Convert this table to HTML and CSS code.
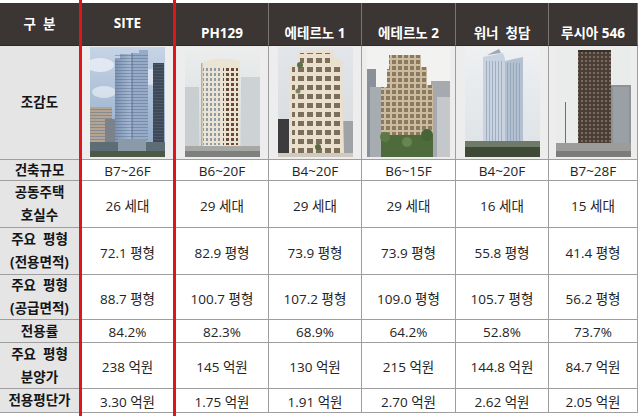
FILE: index.html
```html
<!DOCTYPE html>
<html lang="ko">
<head>
<meta charset="utf-8">
<title>비교표</title>
<link rel="stylesheet" href="styles.css">
</head>
<body>
<div class="sheet">
  <div class="redline red-a"></div>
  <div class="redline red-b"></div>

  <div class="row r-head">
    <div class="cell head head-mid">구 &nbsp;분</div>
    <div class="cell head head-mid">SITE</div>
    <div class="cell head head-low">PH129</div>
    <div class="cell head head-low">에테르노 1</div>
    <div class="cell head head-low">에테르노 2</div>
    <div class="cell head head-low">워너 &nbsp;청담</div>
    <div class="cell head head-low">루시아 546</div>
  </div>

  <div class="row r-img">
    <div class="cell label">조감도</div>
    <div class="cell pic-cell">
      <svg class="pic" viewBox="0 0 75 110" preserveAspectRatio="none">
        <defs>
          <linearGradient id="s1sky" x1="0" y1="0" x2="0" y2="1"><stop offset="0" stop-color="#c6d4e6"/><stop offset="1" stop-color="#8ea8c7"/></linearGradient>
          <linearGradient id="s1t" x1="0" y1="0" x2="1" y2="0"><stop offset="0" stop-color="#7d94b2"/><stop offset="1" stop-color="#a9bcd4"/></linearGradient>
          <pattern id="s1w" width="4" height="3" patternUnits="userSpaceOnUse"><rect y="2" width="4" height="1" fill="#56698a" opacity=".45"/></pattern>
        </defs>
        <rect width="75" height="110" fill="url(#s1sky)"/>
        <ellipse cx="10" cy="18" rx="14" ry="7" fill="#eef2f8" opacity=".75"/>
        <ellipse cx="60" cy="30" rx="14" ry="8" fill="#e9eef6" opacity=".7"/>
        <ellipse cx="14" cy="45" rx="12" ry="6" fill="#f2f5f9" opacity=".6"/>
        <rect x="0" y="60" width="22" height="50" fill="#b3a594"/>
        <rect x="0" y="60" width="22" height="50" fill="url(#s1w)"/>
        <rect x="15" y="72" width="11" height="38" fill="#7b828c"/>
        <path d="M25 12 L30 12 L30 7 L42 7 L42 110 L25 110Z" fill="url(#s1t)"/>
        <path d="M42 6 L49 6 L49 3 L58 3 L58 110 L42 110Z" fill="#96abc6"/>
        <rect x="25" y="8" width="33" height="102" fill="url(#s1w)"/>
        <rect x="41.5" y="6" width="1" height="104" fill="#5d7090"/>
        <rect x="63" y="16" width="11" height="94" fill="#3f4956"/>
        <rect x="63" y="16" width="11" height="94" fill="url(#s1w)"/>
        <rect x="0" y="95" width="75" height="15" fill="#5e6c75"/>
        <rect x="28" y="92" width="28" height="12" fill="#8b9aa8"/>
        <rect x="0" y="104" width="75" height="6" fill="#4b5945"/>
      </svg>
    </div>
    <div class="cell pic-cell">
      <svg class="pic" viewBox="0 0 75 110" preserveAspectRatio="none">
        <defs>
          <linearGradient id="s2sky" x1="0" y1="0" x2="0" y2="1"><stop offset="0" stop-color="#eceeee"/><stop offset="1" stop-color="#d3d7d9"/></linearGradient>
          <pattern id="s2w" width="5" height="5" patternUnits="userSpaceOnUse"><rect x="1" y="1" width="3" height="3" fill="#6b4a34"/></pattern>
          <pattern id="s2g" width="4" height="5" patternUnits="userSpaceOnUse"><rect x="1" y="1" width="2" height="3" fill="#8e9ba3"/></pattern>
        </defs>
        <rect width="75" height="110" fill="url(#s2sky)"/>
        <rect x="0" y="40" width="14" height="70" fill="#c9ced1"/>
        <rect x="56" y="30" width="19" height="80" fill="#cdd2d5"/>
        <path d="M16 16 Q34 8 55 14 L55 100 L16 100Z" fill="#ebe4d4"/>
        <rect x="18" y="20" width="18" height="78" fill="url(#s2g)"/>
        <rect x="38" y="19" width="15" height="79" fill="url(#s2w)"/>
        <rect x="16" y="16" width="1.5" height="84" fill="#b9b1a0"/>
        <rect x="0" y="99" width="75" height="11" fill="#a7a8a5"/>
        <rect x="0" y="104" width="75" height="6" fill="#7e807e"/>
      </svg>
    </div>
    <div class="cell pic-cell">
      <svg class="pic" viewBox="0 0 75 110" preserveAspectRatio="none">
        <defs>
          <linearGradient id="s3sky" x1="0" y1="0" x2="0" y2="1"><stop offset="0" stop-color="#e2e6ea"/><stop offset="1" stop-color="#d6dadd"/></linearGradient>
          <pattern id="s3w" width="9" height="9" patternUnits="userSpaceOnUse"><rect x="2" y="2" width="6" height="5" fill="#7b6f5b"/></pattern>
        </defs>
        <rect width="75" height="110" fill="url(#s3sky)"/>
        <rect x="0" y="72" width="12" height="38" fill="#3c3c3f"/>
        <rect x="62" y="74" width="13" height="36" fill="#9fa3a7"/>
        <path d="M11 18 L20 18 L20 4 L54 2 L56 10 L64 14 L66 108 L11 108Z" fill="#eae0cd"/>
        <rect x="14" y="20" width="50" height="86" fill="url(#s3w)"/>
        <rect x="22" y="6" width="30" height="12" fill="url(#s3w)"/>
        <circle cx="22" cy="18" r="3" fill="#5e6f46"/>
        <circle cx="20" cy="44" r="2.5" fill="#617248" opacity=".8"/>
        <circle cx="40" cy="100" r="3" fill="#5a6a42"/>
        <rect x="0" y="106" width="75" height="4" fill="#cfc9be"/>
      </svg>
    </div>
    <div class="cell pic-cell">
      <svg class="pic wide" viewBox="0 0 83 110" preserveAspectRatio="none">
        <defs>
          <pattern id="s4w" width="6" height="6" patternUnits="userSpaceOnUse"><rect width="6" height="6" fill="#cdbb9d"/><rect x="1" y="1" width="4" height="4" fill="#8a7a61"/></pattern>
        </defs>
        <rect width="83" height="110" fill="#f2f2f1"/>
        <rect x="0" y="22" width="9" height="88" fill="#8a9097"/>
        <rect x="3" y="40" width="16" height="70" fill="#a7acb1"/>
        <rect x="64" y="34" width="19" height="76" fill="#a6aaae"/>
        <rect x="70" y="50" width="13" height="60" fill="#c5c8cb"/>
        <path d="M22 8 L54 8 L54 20 L60 20 L60 38 L66 38 L66 96 L14 96 L14 40 L20 40 L20 22 L22 22Z" fill="url(#s4w)"/>
        <rect x="14" y="88" width="52" height="22" fill="#4d6b3b"/>
        <circle cx="18" cy="90" r="5" fill="#5c7a46"/>
        <circle cx="60" cy="88" r="6" fill="#466437"/>
        <circle cx="40" cy="95" r="5" fill="#6a8450"/>
      </svg>
    </div>
    <div class="cell pic-cell">
      <svg class="pic" viewBox="0 0 75 110" preserveAspectRatio="none">
        <defs>
          <linearGradient id="s5sky" x1="0" y1="0" x2="0" y2="1"><stop offset="0" stop-color="#eef0f2"/><stop offset="1" stop-color="#dde2e6"/></linearGradient>
          <pattern id="s5w" width="3" height="4" patternUnits="userSpaceOnUse"><rect width="1" height="4" fill="#8396ad" opacity=".6"/></pattern>
        </defs>
        <rect width="75" height="110" fill="url(#s5sky)"/>
        <path d="M18 10 L38 6 L40 12 L40 108 L18 108Z" fill="#c9d3df"/>
        <path d="M40 14 L58 10 L58 108 L40 108Z" fill="#b2c0d0"/>
        <rect x="20" y="14" width="18" height="92" fill="url(#s5w)"/>
        <rect x="41" y="16" width="16" height="90" fill="url(#s5w)"/>
        <path d="M22 8 L34 2 L36 6Z" fill="#9aa8b8"/>
        <rect x="0" y="94" width="75" height="16" fill="#6f7a68"/>
        <rect x="0" y="100" width="75" height="10" fill="#3e4a36"/>
      </svg>
    </div>
    <div class="cell pic-cell">
      <svg class="pic" viewBox="0 0 75 110" preserveAspectRatio="none">
        <defs>
          <pattern id="s6w" width="4" height="4" patternUnits="userSpaceOnUse"><rect width="4" height="4" fill="#4a3e37"/><rect x="1" y="1" width="2" height="2" fill="#7a6b5f"/></pattern>
        </defs>
        <rect width="75" height="110" fill="#eaeceb"/>
        <rect x="55" y="38" width="20" height="72" fill="#8e9398"/>
        <rect x="57" y="40" width="16" height="70" fill="#a4a8ac" opacity=".6"/>
        <rect x="22" y="3" width="33" height="107" fill="url(#s6w)"/>
        <rect x="22" y="3" width="33" height="2" fill="#3a302a"/>
        <rect x="9" y="55" width="1" height="50" fill="#6f6f6f"/>
        <rect x="0" y="96" width="75" height="14" fill="#9c9d9b"/>
        <rect x="0" y="104" width="75" height="6" fill="#7c7d7b"/>
      </svg>
    </div>
  </div>

  <div class="row r-3">
    <div class="cell label">건축규모</div>
    <div class="cell val">B7~26F</div>
    <div class="cell val">B6~20F</div>
    <div class="cell val">B4~20F</div>
    <div class="cell val">B6~15F</div>
    <div class="cell val">B4~20F</div>
    <div class="cell val">B7~28F</div>
  </div>

  <div class="row r-4">
    <div class="cell label">공동주택<br>호실수</div>
    <div class="cell val">26 세대</div>
    <div class="cell val">29 세대</div>
    <div class="cell val">29 세대</div>
    <div class="cell val">29 세대</div>
    <div class="cell val">16 세대</div>
    <div class="cell val">15 세대</div>
  </div>

  <div class="row r-5">
    <div class="cell label">주요 &nbsp;평형<br>(전용면적)</div>
    <div class="cell val">72.1 평형</div>
    <div class="cell val">82.9 평형</div>
    <div class="cell val">73.9 평형</div>
    <div class="cell val">73.9 평형</div>
    <div class="cell val">55.8 평형</div>
    <div class="cell val">41.4 평형</div>
  </div>

  <div class="row r-6">
    <div class="cell label">주요 &nbsp;평형<br>(공급면적)</div>
    <div class="cell val">88.7 평형</div>
    <div class="cell val">100.7 평형</div>
    <div class="cell val">107.2 평형</div>
    <div class="cell val">109.0 평형</div>
    <div class="cell val">105.7 평형</div>
    <div class="cell val">56.2 평형</div>
  </div>

  <div class="row r-7">
    <div class="cell label">전용률</div>
    <div class="cell val">84.2%</div>
    <div class="cell val">82.3%</div>
    <div class="cell val">68.9%</div>
    <div class="cell val">64.2%</div>
    <div class="cell val">52.8%</div>
    <div class="cell val">73.7%</div>
  </div>

  <div class="row r-8">
    <div class="cell label">주요 &nbsp;평형<br>분양가</div>
    <div class="cell val">238 억원</div>
    <div class="cell val">145 억원</div>
    <div class="cell val">130 억원</div>
    <div class="cell val">215 억원</div>
    <div class="cell val">144.8 억원</div>
    <div class="cell val">84.7 억원</div>
  </div>

  <div class="row r-9">
    <div class="cell label">전용평단가</div>
    <div class="cell val">3.30 억원</div>
    <div class="cell val">1.75 억원</div>
    <div class="cell val">1.91 억원</div>
    <div class="cell val">2.70 억원</div>
    <div class="cell val">2.62 억원</div>
    <div class="cell val">2.05 억원</div>
  </div>
</div>
</body>
</html>
```

FILE: styles.css
```css
html, body {
  margin: 0;
  padding: 0;
  background: #ffffff;
}

body {
  font-family: "Open Sans", "Noto Sans CJK KR", sans-serif;
  color: #262626;
}

.sheet {
  display: grid;
  width: 640px;
  grid-template-columns: 79px 3px 91px 3px 93px 93px 94px 93px 89px;
  grid-template-rows: 3px 43px 114px 21px 47px 47px 45px 23px 46px 24px 3px;
}

.redline {
  grid-row: 1 / -1;
  background: #e0151b;
}

.red-a { grid-column: 2; }
.red-b { grid-column: 4; }

.row { display: contents; }

.row > :nth-child(1) { grid-column: 1; }
.row > :nth-child(2) { grid-column: 3; }
.row > :nth-child(3) { grid-column: 5; }
.row > :nth-child(4) { grid-column: 6; }
.row > :nth-child(5) { grid-column: 7; }
.row > :nth-child(6) { grid-column: 8; }
.row > :nth-child(7) { grid-column: 9; }

.r-head > * { grid-row: 2; }
.r-img > * { grid-row: 3; }
.r-3 > * { grid-row: 4; }
.r-4 > * { grid-row: 5; }
.r-5 > * { grid-row: 6; }
.r-6 > * { grid-row: 7; }
.r-7 > * { grid-row: 8; }
.r-8 > * { grid-row: 9; }
.r-9 > * { grid-row: 10; }

.cell {
  box-sizing: border-box;
  display: flex;
  align-items: center;
  justify-content: center;
  text-align: center;
  border-bottom: 1px solid #9e9e9e;
  white-space: nowrap;
}

.row > :nth-child(n+3) {
  border-right: 1px solid #9e9e9e;
}

.head {
  background: #3b3634;
  color: #ffffff;
  font-weight: 700;
  font-size: 13.5px;
  border-bottom: 1px solid #2e2a28;
}

.r-head > :nth-child(n+3) {
  border-right: 1px solid #7a7573;
}

.head-mid {
  align-items: center;
  padding-bottom: 2px;
}

.head-low {
  align-items: flex-end;
  padding-bottom: 3px;
}

.label {
  background: #e5e5e5;
  color: #141414;
  font-weight: 700;
  font-size: 13.5px;
  line-height: 23px;
}

.val {
  font-size: 13.5px;
  color: #242424;
  padding-top: 1px;
}

.pic-cell {
  background: #ededed;
  align-items: flex-start;
  padding-top: 1px;
}

.pic {
  display: block;
  width: 75px;
  height: 110px;
}

.pic.wide {
  width: 83px;
}
```
